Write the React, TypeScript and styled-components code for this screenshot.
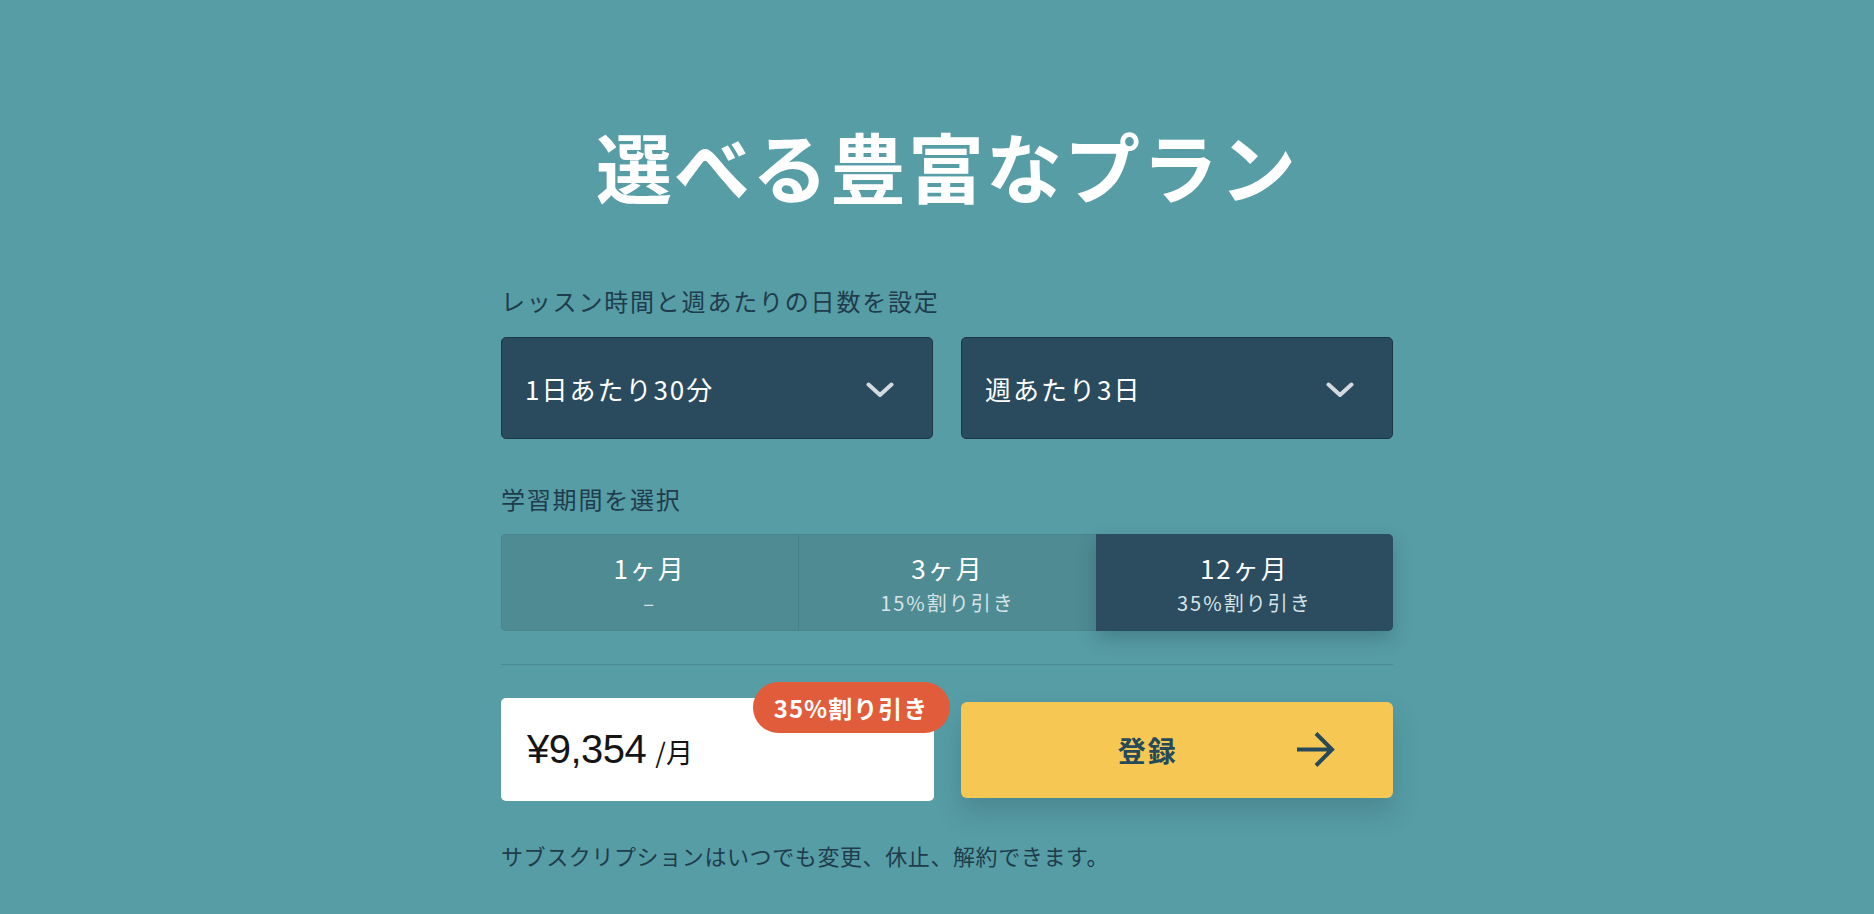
import React from 'react';
import styled, { createGlobalStyle } from 'styled-components';

const GlobalStyle = createGlobalStyle`
    html, body {
        margin: 0;
        padding: 0;
        background-color: #579da6;
    }
    body {
        font-family: "Noto Sans CJK JP", "Noto Sans", sans-serif;
    }
    * {
        box-sizing: border-box;
    }
`;

const Page = styled.div`
    min-height: 100vh;
    display: flex;
    justify-content: center;
    padding-left: 20px;
    padding-top: 126px;
    background-color: #579da6;
`;

const Column = styled.div`
    width: 892px;
    display: flex;
    flex-direction: column;
`;

const Title = styled.h1`
    margin: 0 0 81px;
    font-size: 76px;
    line-height: 78px;
    font-weight: 700;
    letter-spacing: 2px;
    color: #ffffff;
    text-align: center;
`;

const Label = styled.div<{ $gap: number }>`
    margin-bottom: ${(p) => p.$gap}px;
    font-size: 24px;
    line-height: 32px;
    letter-spacing: 1.8px;
    color: #1e3c4c;
`;

const SelectRow = styled.div`
    display: grid;
    grid-template-columns: 1fr 1fr;
    gap: 28px;
    margin-bottom: 44px;
`;

const Select = styled.div`
    height: 102px;
    display: flex;
    align-items: center;
    justify-content: space-between;
    padding: 0 38px 0 23px;
    background-color: #2a4b5e;
    border: 1px solid #1d3746;
    border-radius: 5px;
    color: #ffffff;
    font-size: 26px;
    letter-spacing: 2px;
    cursor: pointer;
`;

const Chevron = styled.svg`
    width: 28px;
    height: 16px;
    margin-top: 3px;
`;

const Segments = styled.div`
    display: grid;
    grid-template-columns: repeat(3, 1fr);
    height: 97px;
    margin-bottom: 33px;
    border-radius: 5px;
    background-color: #4e8b93;
    box-shadow: inset 0 0 0 1px #4a858d;
`;

const Segment = styled.div<{ $active?: boolean; $divider?: boolean }>`
    display: flex;
    flex-direction: column;
    align-items: center;
    justify-content: center;
    gap: 5px;
    padding-top: 4px;
    border-left: ${(p) => (p.$divider ? '1px solid #47828b' : 'none')};
    border-radius: ${(p) => (p.$active ? '0 5px 5px 0' : '0')};
    background-color: ${(p) => (p.$active ? '#2b4d5f' : 'transparent')};
    box-shadow: ${(p) => (p.$active ? '0 8px 18px rgba(20, 50, 60, 0.25)' : 'none')};
    cursor: pointer;
`;

const SegmentTitle = styled.div`
    font-size: 26px;
    line-height: 32px;
    letter-spacing: 2px;
    color: #ffffff;
`;

const SegmentSub = styled.div`
    font-size: 20px;
    line-height: 28px;
    letter-spacing: 2px;
    color: #d6e3e6;
`;

const Divider = styled.hr`
    margin: 0 0 33px;
    border: none;
    border-top: 1px solid #4a8b93;
`;

const BottomRow = styled.div`
    display: grid;
    grid-template-columns: 1fr 1fr;
    gap: 27px;
    align-items: center;
    margin-bottom: 39px;
`;

const PriceBox = styled.div`
    position: relative;
    height: 103px;
    display: flex;
    align-items: center;
    padding-left: 26px;
    background-color: #ffffff;
    border-radius: 5px;
    color: #151515;
`;

const Amount = styled.span`
    font-family: "Liberation Sans", "Noto Sans CJK JP", sans-serif;
    font-size: 40px;
    letter-spacing: -0.5px;
`;

const Unit = styled.span`
    margin-left: 9px;
    margin-top: 4px;
    font-size: 27px;
`;

const Badge = styled.div`
    position: absolute;
    top: -16px;
    right: -16px;
    width: 197px;
    height: 51px;
    display: flex;
    align-items: center;
    justify-content: center;
    border-radius: 26px;
    background-color: #e05c3a;
    color: #ffffff;
    font-size: 24px;
    font-weight: 700;
    letter-spacing: 1px;
`;

const RegisterButton = styled.button`
    height: 96px;
    display: flex;
    align-items: center;
    padding: 0 57px 0 39px;
    border: none;
    border-radius: 6px;
    background-color: #f6c853;
    box-shadow: 0 14px 26px rgba(30, 60, 70, 0.22);
    color: #264a5a;
    font-family: "Noto Sans CJK JP", sans-serif;
    font-size: 28px;
    font-weight: 700;
    letter-spacing: 2px;
    cursor: pointer;
`;

const ButtonText = styled.span`
    flex: 1;
    text-align: center;
`;

const Arrow = styled.svg`
    width: 40px;
    height: 37px;
`;

const Note = styled.p`
    margin: 0;
    font-size: 22px;
    line-height: 30px;
    letter-spacing: 0.6px;
    color: #1e3c4c;
`;

const periods = [
    { title: '1ヶ月', sub: '–' },
    { title: '3ヶ月', sub: '15%割り引き' },
    { title: '12ヶ月', sub: '35%割り引き' },
];

function ChevronDown() {
    return (
        <Chevron viewBox="0 0 28 16" fill="none">
            <path d="M2.5 2.5 L14 13 L25.5 2.5" stroke="#d3dadf" strokeWidth="4" strokeLinecap="round" strokeLinejoin="round" />
        </Chevron>
    );
}

export default function App() {
    const selected = 2;

    return (
        <>
            <GlobalStyle />
            <Page>
                <Column>
                    <Title>選べる豊富なプラン</Title>

                    <Label $gap={20}>レッスン時間と週あたりの日数を設定</Label>
                    <SelectRow>
                        <Select>
                            <span>1日あたり30分</span>
                            <ChevronDown />
                        </Select>
                        <Select>
                            <span>週あたり3日</span>
                            <ChevronDown />
                        </Select>
                    </SelectRow>

                    <Label $gap={19}>学習期間を選択</Label>
                    <Segments>
                        {periods.map((p, i) => (
                            <Segment key={p.title} $active={i === selected} $divider={i === 1}>
                                <SegmentTitle>{p.title}</SegmentTitle>
                                <SegmentSub>{p.sub}</SegmentSub>
                            </Segment>
                        ))}
                    </Segments>

                    <Divider />

                    <BottomRow>
                        <PriceBox>
                            <Amount>¥9,354</Amount>
                            <Unit>/月</Unit>
                            <Badge>35%割り引き</Badge>
                        </PriceBox>
                        <RegisterButton>
                            <ButtonText>登録</ButtonText>
                            <Arrow viewBox="0 0 40 37" fill="none">
                                <path d="M1 18.5 H36 M20 2.5 L36 18.5 L20 34.5" stroke="#264a5a" strokeWidth="4" />
                            </Arrow>
                        </RegisterButton>
                    </BottomRow>

                    <Note>サブスクリプションはいつでも変更、休止、解約できます。</Note>
                </Column>
            </Page>
        </>
    );
}
